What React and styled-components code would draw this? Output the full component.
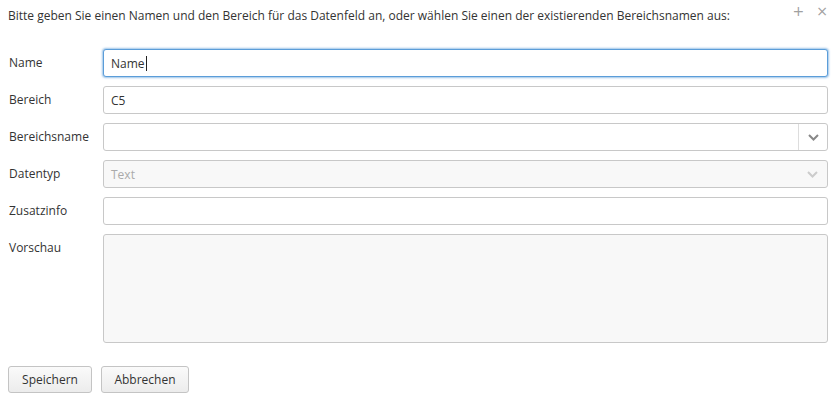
import React from "react";
import styled, { createGlobalStyle } from "styled-components";

const Global = createGlobalStyle`
  html, body { margin: 0; padding: 0; background: #fff; }
  body { font-family: "Open Sans", "Liberation Sans", sans-serif; font-size: 12px; color: #333; }
  * { box-sizing: border-box; }
`;

const Dialog = styled.div`
  width: 836px;
  height: 397px;
  padding: 7px 8px 0 8px;
  display: flex;
  flex-direction: column;
  position: relative;
`;

const Intro = styled.div`
  font-size: 12px;
  line-height: 18px;
  color: #333;
`;

const Corner = styled.div`
  position: absolute;
  top: 1px;
  right: 8px;
  display: flex;
  gap: 12px;
  color: #a0a0a0;
  font-family: "DejaVu Sans", sans-serif;
  font-size: 14px;
  line-height: 20px;
`;

const Form = styled.div`
  margin-top: 24px;
  display: grid;
  grid-template-columns: 95px 1fr;
  row-gap: 9px;
  align-items: start;
`;

const Label = styled.label`
  font-size: 12px;
  line-height: 28px;
  padding-left: 1px;
  color: #333;
`;

const Field = styled.div`
  height: ${(p) => (p.tall ? "109px" : "28px")};
  border: 1px solid ${(p) => (p.focus ? "#5b9dd9" : "#c8c8c8")};
  border-radius: 3px;
  background: ${(p) => (p.disabled ? "#f8f8f8" : "#fff")};
  box-shadow: ${(p) => (p.focus ? "0 0 2px 1px rgba(91,157,217,0.6)" : "none")};
  display: flex;
  align-items: center;
  padding-left: 7px;
  color: ${(p) => (p.disabled ? "#aaa" : "#333")};
  font-size: 12px;
`;

const Caret = styled.span`
  display: inline-block;
  width: 1px;
  height: 15px;
  background: #222;
  margin-left: 1px;
`;

const SelectText = styled.div`
  flex: 1;
`;

const Arrow = styled.div`
  width: 29px;
  height: 100%;
  border-left: ${(p) => (p.divider ? "1px solid #ddd" : "none")};
  display: flex;
  align-items: center;
  justify-content: center;
  color: ${(p) => (p.light ? "#ccc" : "#888")};
`;

const Buttons = styled.div`
  margin-top: 23px;
  display: flex;
  gap: 9px;
`;

const Button = styled.button`
  height: 27px;
  padding: 0 12px;
  font-family: "Open Sans", "Liberation Sans", sans-serif;
  font-size: 12px;
  color: #333;
  border: 1px solid #c4c4c4;
  border-radius: 3px;
  background: linear-gradient(#fafafa, #ececec);
  min-width: ${(p) => p.w}px;
`;

const Chevron = () => (
  <svg width="11" height="7" viewBox="0 0 11 7">
    <path d="M1 1l4.5 4.5L10 1" fill="none" stroke="currentColor" strokeWidth="2" />
  </svg>
);

export default function App() {
  return (
    <>
      <Global />
      <Dialog>
        <Corner>
          <span>+</span>
          <span>×</span>
        </Corner>
        <Intro>
          Bitte geben Sie einen Namen und den Bereich für das Datenfeld an, oder wählen Sie einen der existierenden Bereichsnamen aus:
        </Intro>
        <Form>
          <Label>Name</Label>
          <Field focus>
            Name<Caret />
          </Field>
          <Label>Bereich</Label>
          <Field>C5</Field>
          <Label>Bereichsname</Label>
          <Field>
            <SelectText />
            <Arrow divider>
              <Chevron />
            </Arrow>
          </Field>
          <Label>Datentyp</Label>
          <Field disabled>
            <SelectText>Text</SelectText>
            <Arrow light>
              <Chevron />
            </Arrow>
          </Field>
          <Label>Zusatzinfo</Label>
          <Field />
          <Label>Vorschau</Label>
          <Field tall disabled />
        </Form>
        <Buttons>
          <Button w={84}>Speichern</Button>
          <Button w={88}>Abbrechen</Button>
        </Buttons>
      </Dialog>
    </>
  );
}
